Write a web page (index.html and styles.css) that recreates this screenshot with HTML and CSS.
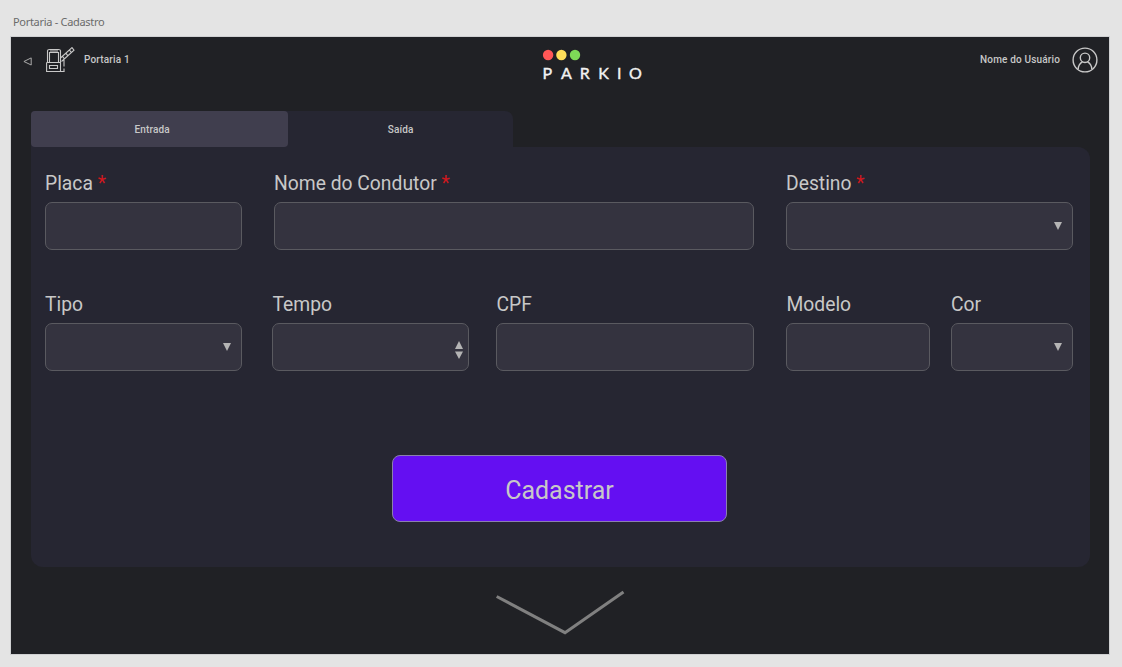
FILE: index.html
```html
<!DOCTYPE html>
<html lang="pt-BR">
<head>
<meta charset="utf-8">
<title>Portaria - Cadastro</title>
<link rel="stylesheet" href="styles.css">
</head>
<body>
<div class="canvas-title">Portaria - Cadastro</div>
<main class="artboard">
  <header class="header">
    <div class="location">
      <svg class="back" width="9" height="9" viewBox="0 0 9 9"><path d="M8.2 .9V8L.9 4.5Z"/></svg>
      <svg class="gate" width="30" height="28" viewBox="0 0 30 28">
        <path d="M1.500 16V3.800Q1.500 2.500 3.500 2.500H12.500Q14.500 2.500 14.500 3.800V24.500M.600 15.500V24.500H18.500M.600 15.500H14.500M3.500 15.500V5.500H12.500V15.500M4 4H12M3.500 18.500H11.500V21.500H3.500Z"/>
        <path d="M14.500 11L26 .6L28 3.200L15.500 14.500M16.500 9.400L18.500 12M20 6.300L22 8.800M23.500 3.100L25.500 5.600M18 13V19.500M18 21.500V24.500"/>
      </svg>
      <span class="small">Portaria 1</span>
    </div>
    <svg class="logo" width="104" height="34" viewBox="0 0 104 34">
      <circle cx="7.100" cy="7" r="5.200" fill="#ff5757"/>
      <circle cx="20.400" cy="7" r="5.200" fill="#ffde59"/>
      <circle cx="34" cy="7" r="5.200" fill="#7ed957"/>
      <text x="1.500 20 38.800 57.200 76 88" y="31">PARKIO</text>
    </svg>
    <div class="user">
      <span class="small">Nome do Usuário</span>
      <svg class="avatar" width="26" height="26" viewBox="0 0 26 26">
        <circle cx="13" cy="13" r="11.900"/>
        <circle cx="13" cy="10.800" r="4.700"/>
        <path d="M6.200 22.300C6.300 18.200 7.900 16.200 10.500 14.900M15.500 14.900C18.100 16.200 19.700 18.200 19.800 22.300"/>
      </svg>
    </div>
  </header>
  <nav class="tabs">
    <div class="tab tab-in">Entrada</div>
    <div class="tab tab-out">Saída</div>
  </nav>
  <section class="panel">
    <div class="row row-top">
      <div class="field"><div class="label">Placa <span class="req">*</span></div><div class="box"></div></div>
      <div class="field"><div class="label">Nome do Condutor <span class="req">*</span></div><div class="box"></div></div>
      <div class="field"><div class="label">Destino <span class="req">*</span></div><div class="box"><svg class="arrow" width="8" height="8"><path d="M0 0H8L4 8Z"/></svg></div></div>
    </div>
    <div class="row row-bottom">
      <div class="field"><div class="label">Tipo</div><div class="box"><svg class="arrow" width="8" height="8"><path d="M0 0H8L4 8Z"/></svg></div></div>
      <div class="field"><div class="label label-in">Tempo</div><div class="box"><svg class="stepper" width="8" height="18"><path d="M0 8L4 0L8 8ZM0 10.500H8L4 18Z"/></svg></div></div>
      <div class="field"><div class="label label-in">CPF</div><div class="box"></div></div>
      <div class="field"><div class="label label-in">Modelo</div><div class="box"></div></div>
      <div class="field"><div class="label">Cor</div><div class="box"><svg class="arrow" width="8" height="8"><path d="M0 0H8L4 8Z"/></svg></div></div>
    </div>
    <div class="submit">Cadastrar</div>
  </section>
  <svg class="chevron" width="130" height="46" viewBox="0 0 130 46"><path d="M1.700 6.500L70 42.700L128.500 2"/></svg>
</main>
</body>
</html>
```
FILE: styles.css
```css
* { box-sizing: border-box; }
body {
  margin: 0;
  height: 667px;
  padding: 0 13px 0 11px;
  overflow: hidden;
  background: #e4e4e4;
  font-family: Roboto, "Liberation Sans", sans-serif;
  color: #c8c8c8;
}
svg { display: block; flex: none; }
.canvas-title {
  height: 37px;
  padding: 14px 0 0 2px;
  font: 11px/16px "Noto Sans", sans-serif;
  letter-spacing: -0.3px;
  color: #6b6b6b;
}
.artboard {
  height: 617px;
  padding: 0 19px 0 20px;
  background: #202125;
  box-shadow: 0 0 0 1px #cfd0d2;
}
.header {
  display: grid;
  grid-template-columns: 518px 104px 1fr;
  height: 74px;
  margin: 0 -8px;
}
.location, .user { display: flex; align-items: flex-start; }
.user { justify-content: flex-end; }
.back { margin: 20px 14px 0 0; fill: none; stroke: #aaa; stroke-width: 1; }
.gate { margin: 10px 8px 0 0; fill: none; stroke: #c8c8c8; stroke-width: 1.1; }
.small { margin-top: 16px; font-size: 10px; line-height: 14px; font-weight: 500; letter-spacing: 0.16px; }
.logo { margin-top: 11px; }
.logo text { font: 400 16px Lato, sans-serif; fill: #f1f1f1; stroke: #f1f1f1; stroke-width: 0.4; }
.avatar { margin: 10px 0 0 12px; fill: none; stroke: #c8c8c8; stroke-width: 1.400; }
.tabs {
  display: flex;
  width: 482px;
  height: 36px;
  background: #262632;
  border-radius: 4px 8px 0 0;
}
.tab { font-size: 10px; line-height: 37px; font-weight: 500; letter-spacing: 0.16px; text-align: center; }
.tab-in { width: 257.4px; padding-right: 15px; background: #403e4e; border-radius: 4px; }
.tab-out { width: 224.6px; }
.panel {
  height: 420px;
  padding: 23px 17px 0 14px;
  background: #262632;
  border-radius: 0 12px 12px 12px;
}
.row { display: grid; height: 121px; }
.row-top { grid-template-columns: 197px 480px 287px; column-gap: 32px; }
.row-bottom { grid-template-columns: 197px 227px 285px 176px 143px; }
.row-bottom .field:nth-child(2) { margin-left: 30px; }
.row-bottom .field:nth-child(3) { margin-left: 27px; }
.row-bottom .field:nth-child(4) { margin-left: 32px; }
.row-bottom .field:nth-child(5) { margin-left: 21px; }
.label { height: 32px; font-size: 19.3px; line-height: 28px; white-space: nowrap; }
.label-in { padding-left: 0.5px; }
.req { color: #d0181e; }
.box {
  display: flex;
  justify-content: flex-end;
  height: 48px;
  border: 1px solid #5a5a60;
  border-radius: 7px;
  background: #34333f;
}
.arrow { margin: 19px 10px 0 0; fill: #b4b4b4; }
.stepper { margin: 17px 5px 0 0; fill: #b4b4b4; }
.submit {
  width: 335px;
  height: 67px;
  margin: 43px 0 0 347px;
  border: 1px solid #8b7fae;
  border-radius: 8px;
  background: #640ff2;
  font-size: 25px;
  line-height: 69px;
  text-align: center;
}
.chevron { margin: 23px 0 0 464px; fill: none; stroke: #808080; stroke-width: 3; }
```
